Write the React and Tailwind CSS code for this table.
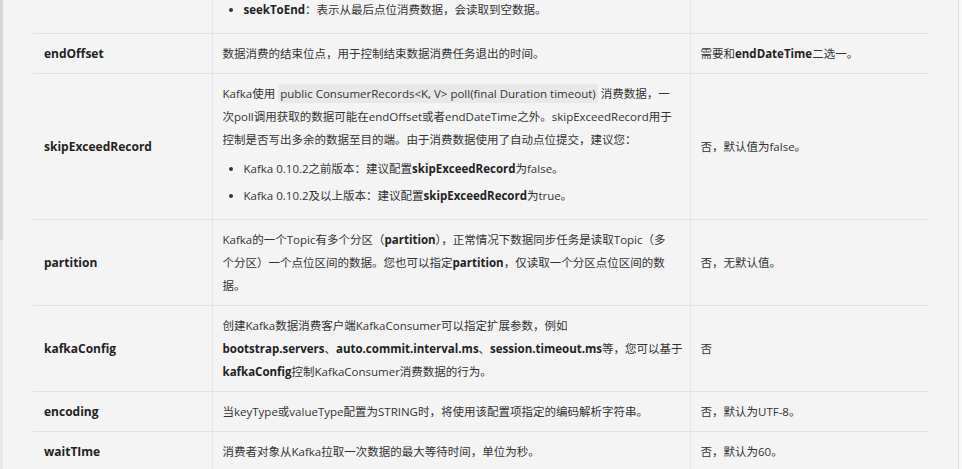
const Code = ({ children }) => (
  <span className="bg-[#e8e8e8] rounded-[2px] px-[2px] py-[2px]">{children}</span>
);

const B = ({ children }) => <strong className="font-bold text-[#222]">{children}</strong>;

const rows = [
  {
    name: 'endOffset',
    desc: <p>数据消费的结束位点，用于控制结束数据消费任务退出的时间。</p>,
    req: (
      <>
        需要和<B>endDateTime</B>二选一。
      </>
    ),
  },
  {
    name: 'skipExceedRecord',
    desc: (
      <>
        <p className="whitespace-nowrap">
          Kafka使用 <Code>public ConsumerRecords&lt;K, V&gt; poll(final Duration timeout)</Code> 消费数据，一
          <br />
          次poll调用获取的数据可能在endOffset或者endDateTime之外。skipExceedRecord用于
          <br />
          控制是否写出多余的数据至目的端。由于消费数据使用了自动点位提交，建议您：
        </p>
        <ul className="list-disc pl-[21px] mt-[6px] mb-[4px] space-y-[4px] marker:text-[#333]">
          <li>
            Kafka 0.10.2之前版本：建议配置<B>skipExceedRecord</B>为false。
          </li>
          <li>
            Kafka 0.10.2及以上版本：建议配置<B>skipExceedRecord</B>为true。
          </li>
        </ul>
      </>
    ),
    req: '否，默认值为false。',
  },
  {
    name: 'partition',
    desc: (
      <p className="whitespace-nowrap">
        Kafka的一个Topic有多个分区（<B>partition</B>），正常情况下数据同步任务是读取Topic（多
        <br />
        个分区）一个点位区间的数据。您也可以指定<B>partition</B>，仅读取一个分区点位区间的数
        <br />
        据。
      </p>
    ),
    req: '否，无默认值。',
  },
  {
    name: 'kafkaConfig',
    desc: (
      <p className="whitespace-nowrap">
        创建Kafka数据消费客户端KafkaConsumer可以指定扩展参数，例如
        <br />
        <B>bootstrap.servers</B>、<B>auto.commit.interval.ms</B>、<B>session.timeout.ms</B>等，您可以基于
        <br />
        <B>kafkaConfig</B>控制KafkaConsumer消费数据的行为。
      </p>
    ),
    req: '否',
  },
  {
    name: 'encoding',
    desc: <p>当keyType或valueType配置为STRING时，将使用该配置项指定的编码解析字符串。</p>,
    req: '否，默认为UTF-8。',
  },
  {
    name: 'waitTIme',
    desc: <p>消费者对象从Kafka拉取一次数据的最大等待时间，单位为秒。</p>,
    req: '否，默认为60。',
  },
];

export default function App() {
  return (
    <div
      className="flex h-[469px] w-[962px] overflow-hidden bg-[#f4f4f4] text-[11.5px] leading-[23px] text-[#333]"
      style={{ fontFamily: '"Open Sans", "Noto Sans CJK SC", sans-serif' }}
    >
      <div className="flex w-[3px] flex-col">
        <div className="h-[240px] bg-[#d6d6d6]" />
        <div className="flex-1 bg-[#e9e9e9]" />
      </div>

      <div className="flex-1 pl-[30px] pr-[26px]">
        <table className="-mt-[2px] w-[896px] table-fixed border-collapse">
          <colgroup>
            <col className="w-[179px]" />
            <col className="w-[478px]" />
            <col className="w-[239px]" />
          </colgroup>
          <tbody>
            <tr className="border-b border-[#e2e2e2]">
              <td className="pl-[11px]" />
              <td className="border-l border-[#e6e6e6] px-[10px] pb-2 align-top">
                <ul className="list-disc pl-[21px] mb-[4px]">
                  <li>
                    <B>seekToEnd</B>：表示从最后点位消费数据，会读取到空数据。
                  </li>
                </ul>
              </td>
              <td className="border-l border-[#e6e6e6] px-[10px]" />
            </tr>
            {rows.map((r) => (
              <tr key={r.name} className="border-b border-[#e2e2e2]">
                <td className="py-2 pl-[11px] pr-[10px] align-middle text-[12px] font-bold text-[#222]">{r.name}</td>
                <td className="border-l border-[#e6e6e6] px-[10px] py-2 align-middle">{r.desc}</td>
                <td className="border-l border-[#e6e6e6] px-[10px] py-2 align-middle">{r.req}</td>
              </tr>
            ))}
          </tbody>
        </table>
      </div>

      <div className="w-px bg-[#dcdcdc]" />
      <div className="w-[3px] bg-[#f9f9f9]" />
    </div>
  );
}
